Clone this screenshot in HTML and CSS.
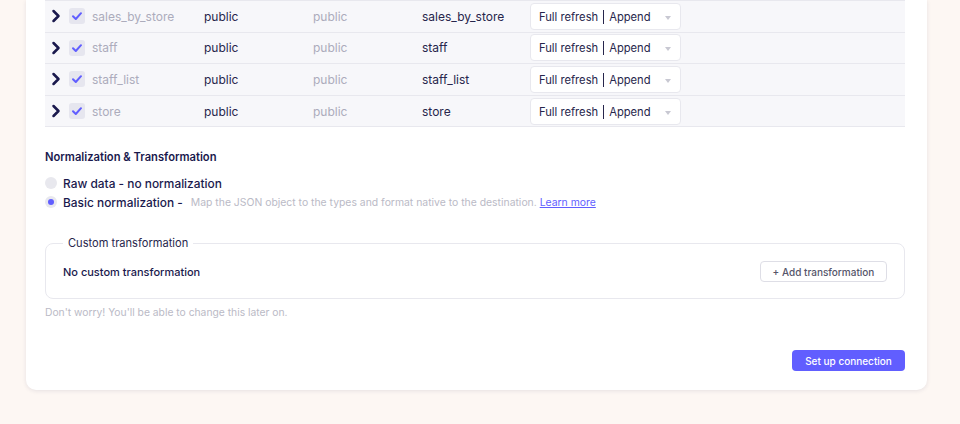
FILE: index.html
```html
<!DOCTYPE html>
<html lang="en">
<head>
    <meta charset="UTF-8">
    <meta name="viewport" content="width=device-width, initial-scale=1.0">
    <title>Set up connection</title>
    <link rel="stylesheet" href="styles.css">
</head>
<body>
    <div class="connection-card">
        <div class="streams-table">
            <div class="stream-row">
                <span class="expand-icon"><svg viewBox="0 0 10 14" width="10" height="14"><path d="M2.5 2 L7.5 7 L2.5 12" /></svg></span>
                <span class="check-box"><svg viewBox="0 0 16 16" width="16" height="16"><path d="M4 8.2 L6.8 11 L12 5.2" /></svg></span>
                <span class="cell muted">sales_by_store</span>
                <span class="cell">public</span>
                <span class="cell muted">public</span>
                <span class="cell">sales_by_store</span>
                <span class="sync-select">Full refresh <i class="sep"></i> Append <b class="caret"></b></span>
            </div>
            <div class="stream-row">
                <span class="expand-icon"><svg viewBox="0 0 10 14" width="10" height="14"><path d="M2.5 2 L7.5 7 L2.5 12" /></svg></span>
                <span class="check-box"><svg viewBox="0 0 16 16" width="16" height="16"><path d="M4 8.2 L6.8 11 L12 5.2" /></svg></span>
                <span class="cell muted">staff</span>
                <span class="cell">public</span>
                <span class="cell muted">public</span>
                <span class="cell">staff</span>
                <span class="sync-select">Full refresh <i class="sep"></i> Append <b class="caret"></b></span>
            </div>
            <div class="stream-row">
                <span class="expand-icon"><svg viewBox="0 0 10 14" width="10" height="14"><path d="M2.5 2 L7.5 7 L2.5 12" /></svg></span>
                <span class="check-box"><svg viewBox="0 0 16 16" width="16" height="16"><path d="M4 8.2 L6.8 11 L12 5.2" /></svg></span>
                <span class="cell muted">staff_list</span>
                <span class="cell">public</span>
                <span class="cell muted">public</span>
                <span class="cell">staff_list</span>
                <span class="sync-select">Full refresh <i class="sep"></i> Append <b class="caret"></b></span>
            </div>
            <div class="stream-row">
                <span class="expand-icon"><svg viewBox="0 0 10 14" width="10" height="14"><path d="M2.5 2 L7.5 7 L2.5 12" /></svg></span>
                <span class="check-box"><svg viewBox="0 0 16 16" width="16" height="16"><path d="M4 8.2 L6.8 11 L12 5.2" /></svg></span>
                <span class="cell muted">store</span>
                <span class="cell">public</span>
                <span class="cell muted">public</span>
                <span class="cell">store</span>
                <span class="sync-select">Full refresh <i class="sep"></i> Append <b class="caret"></b></span>
            </div>
        </div>

        <h3 class="section-title">Normalization &amp; Transformation</h3>
        <div class="radio-list">
            <label class="radio-option">
                <span class="radio"></span>
                <span class="radio-label">Raw data - no normalization</span>
            </label>
            <label class="radio-option">
                <span class="radio checked"></span>
                <span class="radio-label">Basic normalization -</span>
                <span class="radio-desc">Map the JSON object to the types and format native to the destination. <a href="#">Learn more</a></span>
            </label>
        </div>

        <fieldset class="transform-box">
            <legend>Custom transformation</legend>
            <div class="transform-body">
                <span class="transform-empty">No custom transformation</span>
                <button class="outline-button">+ Add transformation</button>
            </div>
        </fieldset>
        <p class="hint">Don't worry! You'll be able to change this later on.</p>

        <div class="card-footer">
            <button class="primary-button">Set up connection</button>
        </div>
    </div>
</body>
</html>
```

FILE: styles.css
```css
:root {
    --page-color: #fdf7f3;
    --card-color: #ffffff;
    --row-color: #f7f7fa;
    --line-color: #e8e8ee;
    --text-color: #27264c;
    --muted-color: #acacbc;
    --light-color: #babac6;
    --accent-color: #615eff;
}

* {
    margin: 0;
    box-sizing: border-box;
}

body {
    font-family: Inter, "Noto Sans", sans-serif;
    background: var(--page-color);
    color: var(--text-color);
    min-height: 100vh;
}

.connection-card {
    width: 901px;
    margin-left: 26px;
    padding: 0 22px 19px 19px;
    background: var(--card-color);
    border-radius: 0 0 10px 10px;
    box-shadow: 0 1px 4px rgba(26, 25, 77, 0.1);
}

.streams-table {
    border-top: 1px solid var(--line-color);
}

.stream-row {
    display: grid;
    grid-template-columns: 24px 23px 112px 109px 109px 108px 151px 1fr;
    align-items: center;
    height: 31.6px;
    background: var(--row-color);
    border-bottom: 1px solid var(--line-color);
    font-size: 12px;
}

.expand-icon {
    display: flex;
    padding-left: 6px;
}

.expand-icon svg path {
    fill: none;
    stroke: #1a194d;
    stroke-width: 2.5;
    stroke-linecap: round;
    stroke-linejoin: round;
}

.check-box {
    display: flex;
    width: 16px;
    height: 16px;
    border-radius: 3px;
    background: #e6e6ef;
}

.check-box svg path {
    fill: none;
    stroke: var(--accent-color);
    stroke-width: 2;
    stroke-linecap: round;
    stroke-linejoin: round;
}

.cell {
    white-space: nowrap;
}

.cell.muted {
    color: var(--muted-color);
}

.sync-select {
    display: flex;
    align-items: center;
    height: 27px;
    padding: 1px 8px 0;
    background: #fff;
    border: 1px solid var(--line-color);
    border-radius: 4px;
    font-size: 11.2px;
    position: relative;
}

.sync-select .sep {
    width: 1px;
    height: 14px;
    margin: 0 5px;
    background: var(--text-color);
}

.sync-select .caret {
    position: absolute;
    right: 9px;
    top: 12px;
    border-left: 3.5px solid transparent;
    border-right: 3.5px solid transparent;
    border-top: 4px solid #c8c8d2;
}

.section-title {
    margin-top: 22px;
    font-size: 11.2px;
    font-weight: 600;
    line-height: 16px;
    color: #1a194d;
}

.radio-list {
    display: flex;
    flex-direction: column;
    gap: 1px;
    margin-top: 9px;
}

.radio-option {
    display: flex;
    align-items: center;
    height: 18px;
}

.radio {
    width: 12px;
    height: 12px;
    margin-right: 6px;
    border-radius: 50%;
    background: #e8e8ee;
    display: flex;
    align-items: center;
    justify-content: center;
}

.radio.checked::after {
    content: "";
    width: 6px;
    height: 6px;
    border-radius: 50%;
    background: var(--accent-color);
}

.radio-label {
    font-size: 11.9px;
    font-weight: 500;
    color: #1a194d;
}

.radio-desc {
    margin-left: 8px;
    font-size: 10.4px;
    color: var(--light-color);
}

.radio-desc a {
    color: var(--accent-color);
}

.transform-box {
    margin-top: 24px;
    padding: 10px 17px 16px 17px;
    border: 1.5px solid var(--line-color);
    border-radius: 8px;
}

.transform-box legend {
    padding: 0 5px;
    margin-left: 0;
    font-size: 11.1px;
    line-height: 16px;
    color: var(--text-color);
}

.transform-body {
    display: flex;
    align-items: center;
    justify-content: space-between;
}

.transform-empty {
    font-size: 11px;
    font-weight: 500;
    color: #1a194d;
}

.outline-button {
    height: 21px;
    width: 127px;
    background: #fff;
    border: 1px solid #dedee6;
    border-radius: 4px;
    font-family: inherit;
    font-size: 10px;
    font-weight: 500;
    color: #55556a;
}

.hint {
    margin-top: 6px;
    font-size: 10.3px;
    line-height: 14px;
    color: var(--light-color);
}

.card-footer {
    display: flex;
    justify-content: flex-end;
    margin-top: 31px;
}

.primary-button {
    height: 21px;
    width: 113px;
    background: var(--accent-color);
    border: 0;
    border-radius: 4px;
    font-family: inherit;
    font-size: 10px;
    font-weight: 500;
    color: #fff;
}
```
